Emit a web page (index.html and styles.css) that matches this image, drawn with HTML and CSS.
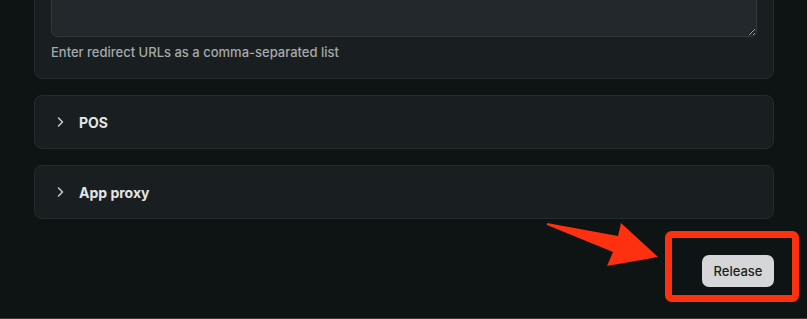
FILE: index.html
```html
<!DOCTYPE html>
<html lang="en">
<head>
    <meta charset="UTF-8">
    <meta name="viewport" content="width=device-width, initial-scale=1.0">
    <title>App setup</title>
    <link rel="stylesheet" href="styles.css">
</head>
<body>
    <div class="page">
        <div class="sections">
            <div class="card card-open">
                <textarea class="url-input"></textarea>
                <p class="help-text">Enter redirect URLs as a comma-separated list</p>
            </div>

            <div class="card card-collapsed">
                <span class="chevron">
                    <svg width="20" height="20" viewBox="0 0 20 20"><path d="M7.5 6l4 4-4 4" fill="none" stroke="#c9cdcf" stroke-width="1.5" stroke-linecap="round" stroke-linejoin="round"/></svg>
                </span>
                <h3>POS</h3>
            </div>

            <div class="card card-collapsed">
                <span class="chevron">
                    <svg width="20" height="20" viewBox="0 0 20 20"><path d="M7.5 6l4 4-4 4" fill="none" stroke="#c9cdcf" stroke-width="1.5" stroke-linecap="round" stroke-linejoin="round"/></svg>
                </span>
                <h3>App proxy</h3>
            </div>
        </div>

        <div class="actions">
            <button class="release-button">Release</button>
        </div>
    </div>

    <div class="bottom-edge"></div>

    <svg class="annotation" width="807" height="319" viewBox="0 0 807 319">
        <polygon points="547,223 618,236 621,223 658,257 607,266 613,252 547,225" fill="#fd300f"/>
        <rect x="668.5" y="234.5" width="127" height="64" rx="3" fill="none" stroke="#fd300f" stroke-width="7"/>
    </svg>
</body>
</html>
```

FILE: styles.css
```css
body {
    margin: 0;
    height: 100vh;
    overflow: hidden;
    font-family: Inter, "Noto Sans", sans-serif;
    background: #0e1314;
    display: flex;
    flex-direction: column;
    position: relative;
}

.page {
    padding: 0 33px 0 34px;
    margin-top: -76px;
}

.sections {
    display: flex;
    flex-direction: column;
    gap: 16px;
}

.card {
    background: #191e20;
    border: 1px solid #242c2e;
    border-radius: 8px;
    padding: 16px;
}

.url-input {
    display: block;
    box-sizing: border-box;
    width: 100%;
    height: 96px;
    margin: 0;
    background: #22282b;
    border: 1px solid #30383a;
    border-radius: 6px;
    color: #e3e5e6;
    font-family: inherit;
}

.help-text {
    margin: 5px 0 0;
    font-size: 13px;
    font-weight: 500;
    line-height: 20px;
    color: #a5aaac;
}

.card-collapsed {
    display: flex;
    align-items: center;
    gap: 8px;
    height: 20px;
}

.chevron {
    display: flex;
    width: 20px;
    height: 20px;
}

.card-collapsed h3 {
    margin: 0;
    font-size: 14px;
    font-weight: 650;
    color: #e3e5e6;
}

.actions {
    display: flex;
    justify-content: flex-end;
    margin-top: 36px;
}

.release-button {
    width: 72px;
    height: 32px;
    padding: 0;
    border: none;
    border-radius: 7px;
    background: #d4d6d8;
    color: #1c1f21;
    font-family: inherit;
    font-size: 13px;
    font-weight: 550;
}

.bottom-edge {
    margin-top: auto;
    height: 1px;
    background: #3a3e3f;
}

.annotation {
    position: absolute;
    top: 0;
    left: 0;
}
```
